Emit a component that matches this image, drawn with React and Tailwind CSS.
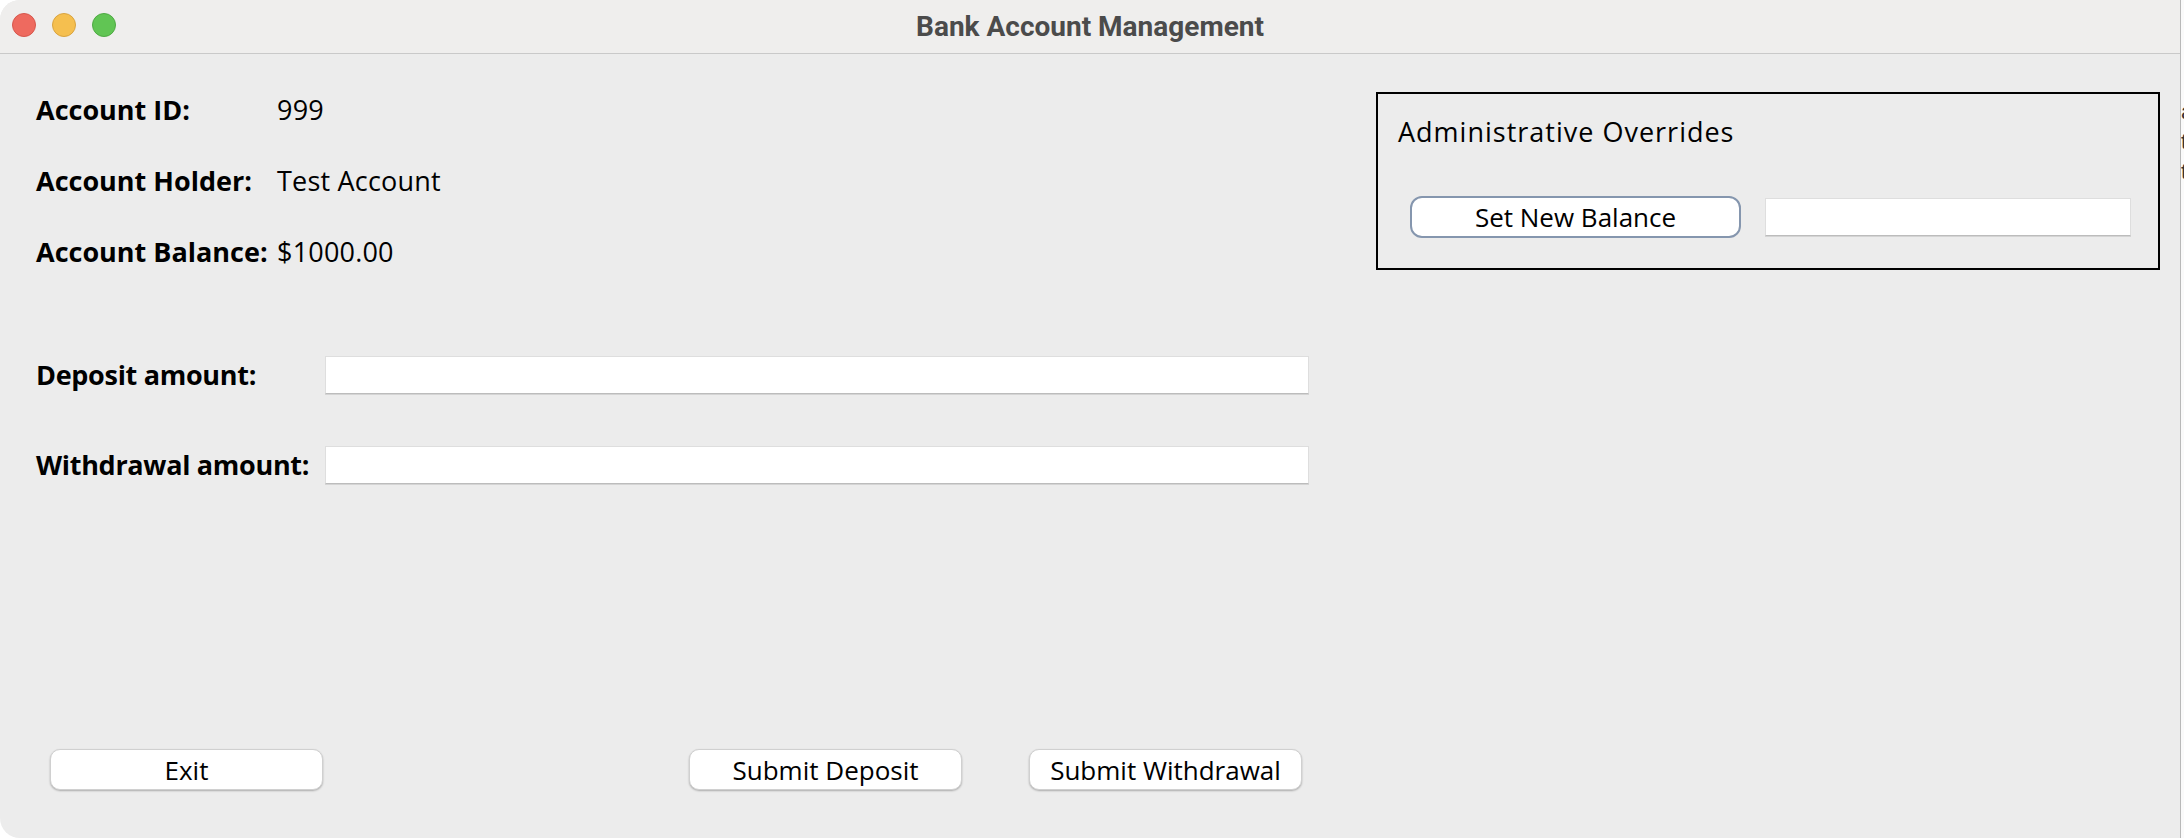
import React from "react";

function Field({ className = "" }) {
  return (
    <div
      className={`h-[38px] bg-white border border-[#dedede] border-b-[#bcbcbc] shadow-[0_1px_0_#d4d4d4] ${className}`}
    />
  );
}

function Btn({ children }) {
  return (
    <div className="w-[273px] h-[41px] flex items-center justify-center bg-white rounded-[10px] border-[0.5px] border-[#d0d0d0] shadow-[0_1px_2px_rgba(0,0,0,0.28)] text-[26px] leading-none text-black">
      {children}
    </div>
  );
}

export default function App() {
  return (
    <div
      className="w-[2184px] h-[838px] overflow-hidden bg-white flex"
      style={{ fontFamily: '"Open Sans", "Noto Sans", sans-serif' }}
    >
      <div className="w-[2181px] h-[838px] flex flex-col bg-[#ececec] rounded-tl-[20px] rounded-bl-[20px] border-r border-[#b8b8b8] overflow-hidden">
        {/* title bar */}
        <div className="h-[54px] shrink-0 relative flex items-center justify-center bg-[#efeeed] border-b border-[#c9c9c9]">
          <div className="absolute left-[12px] top-[13px] flex gap-[16px]">
            <div className="w-[24px] h-[24px] rounded-full bg-[#ee6a5f] border border-[#d6574d]" />
            <div className="w-[24px] h-[24px] rounded-full bg-[#f5bf4f] border border-[#d8a340]" />
            <div className="w-[24px] h-[24px] rounded-full bg-[#61c554] border border-[#4fa944]" />
          </div>
          <div
            className="text-[28px] font-bold text-[#4b4b4b] leading-none"
            style={{ fontFamily: 'Roboto, "Liberation Sans", sans-serif' }}
          >
            Bank Account Management
          </div>
        </div>

        {/* body */}
        <div className="flex-1 flex flex-col">
          <div className="flex flex-1">
            {/* left column */}
            <div className="w-[1309px] pl-[36px] pt-[38px] flex flex-col text-black">
              <div className="flex flex-col gap-[35px] text-[27px] leading-[36px]">
                <div className="flex">
                  <div className="w-[241px] font-bold">Account ID:</div>
                  <div className="tracking-[0.2px]">999</div>
                </div>
                <div className="flex">
                  <div className="w-[241px] font-bold">Account Holder:</div>
                  <div className="tracking-[0.2px]">Test Account</div>
                </div>
                <div className="flex">
                  <div className="w-[241px] font-bold">Account Balance:</div>
                  <div className="tracking-[0.2px]">$1000.00</div>
                </div>
              </div>

              <div className="mt-[86px] flex flex-col gap-[52px] text-[27px]">
                <div className="flex items-center">
                  <div className="w-[289px] font-bold leading-[38px] tracking-[-0.3px]">Deposit amount:</div>
                  <Field className="flex-1" />
                </div>
                <div className="flex items-center">
                  <div className="w-[289px] font-bold leading-[38px] tracking-[-0.3px]">Withdrawal amount:</div>
                  <Field className="flex-1" />
                </div>
              </div>
            </div>

            {/* admin panel */}
            <div className="ml-[67px] mt-[38px] w-[784px] h-[178px] border-2 border-black flex flex-col">
              <div className="pl-[20px] pt-[20px] text-[27px] leading-[36px] tracking-[1px] text-black">
                Administrative Overrides
              </div>
              <div className="mt-[46px] pl-[32px] flex items-center gap-[24px]">
                <div className="w-[331px] h-[42px] flex items-center justify-center bg-white rounded-[12px] border-2 border-[#8596ae] text-[26px] leading-none text-black">
                  Set New Balance
                </div>
                <Field className="w-[366px]" />
              </div>
            </div>
          </div>

          {/* bottom buttons */}
          <div className="pl-[50px] pb-[48px] w-[1302px] flex justify-between">
            <Btn>Exit</Btn>
            <div className="flex gap-[67px]">
              <Btn>Submit Deposit</Btn>
              <Btn>Submit Withdrawal</Btn>
            </div>
          </div>
        </div>
      </div>
      <div className="flex-1 bg-[#fafafa] overflow-hidden flex flex-col pt-[100px] gap-[6px] text-[22px] leading-[24px] text-[#333]" style={{ fontFamily: '"Liberation Sans", sans-serif' }}>
        <span>a</span>
        <span>t</span>
        <span>t</span>
      </div>
    </div>
  );
}
